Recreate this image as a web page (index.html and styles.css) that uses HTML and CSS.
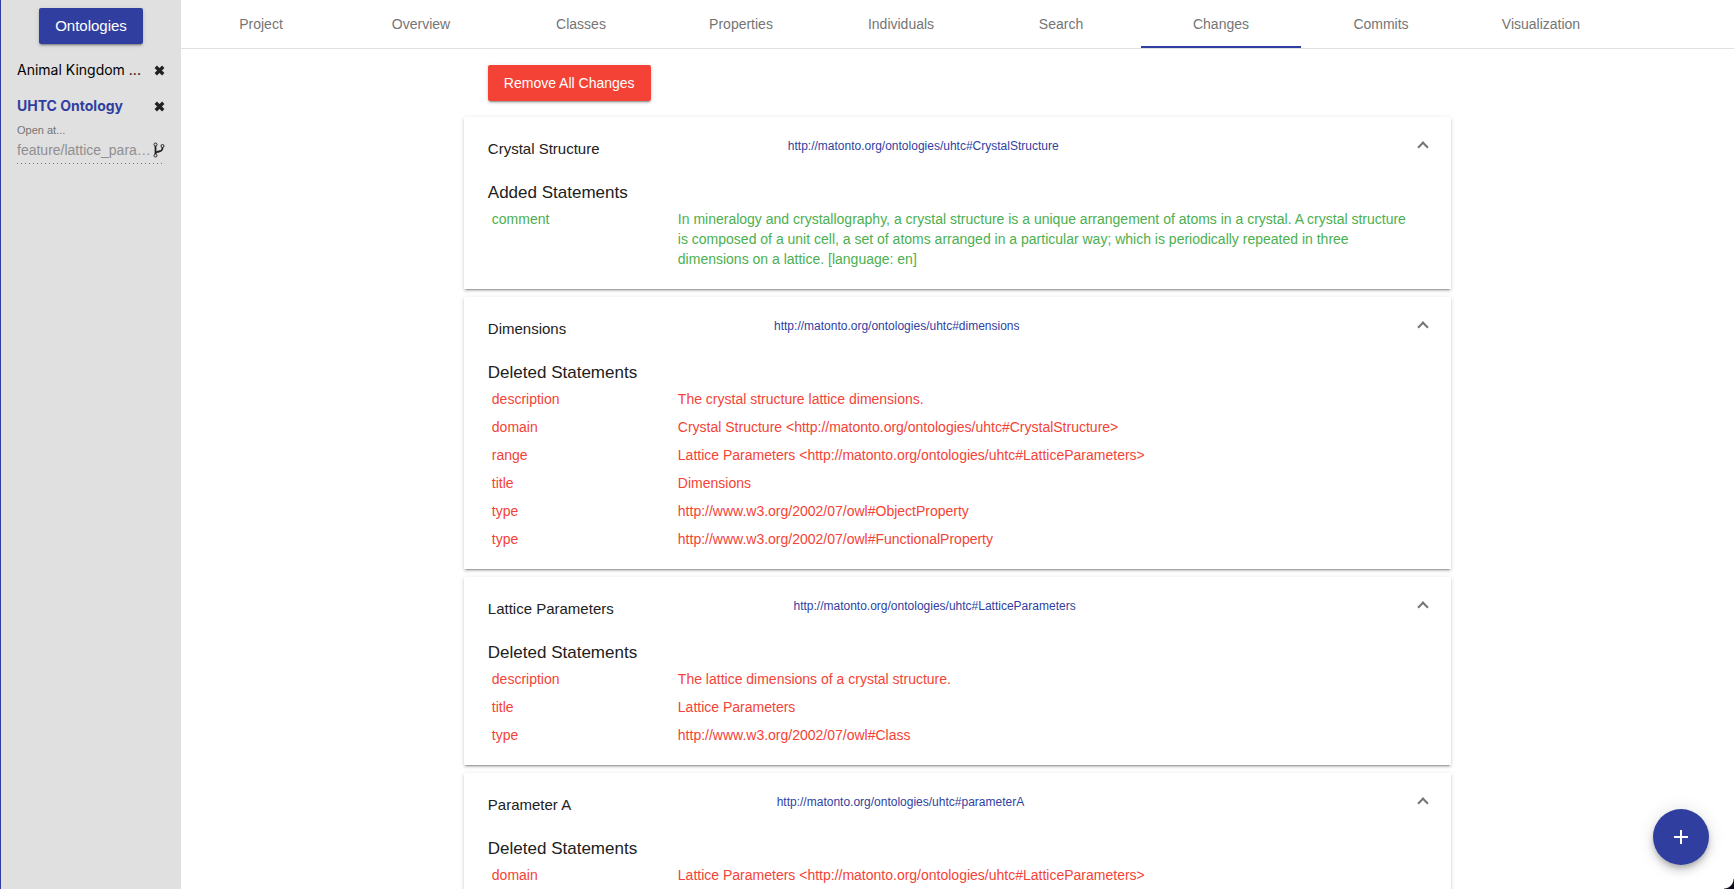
FILE: index.html
```html
<!DOCTYPE html>
<html lang="en">
<head>
<meta charset="utf-8">
<title>Ontology Editor</title>
<link rel="stylesheet" href="styles.css">
</head>
<body>
<div class="app">
  <aside class="sidebar">
    <button class="btn btn-primary" type="button">Ontologies</button>
    <ul class="open-list">
      <li class="open-item">
        <a class="open-name" href="#">Animal Kingdom ...</a>
        <button class="icon-btn" type="button" aria-label="Close Animal Kingdom"><svg width="11" height="11" viewBox="0 0 10 10"><path d="M1.600 1.600 8.400 8.400M8.400 1.600 1.600 8.400" stroke="currentColor" stroke-width="3" fill="none"/></svg></button>
      </li>
      <li class="open-item active">
        <a class="open-name" href="#">UHTC Ontology</a>
        <button class="icon-btn" type="button" aria-label="Close UHTC Ontology"><svg width="11" height="11" viewBox="0 0 10 10"><path d="M1.600 1.600 8.400 8.400M8.400 1.600 1.600 8.400" stroke="currentColor" stroke-width="3" fill="none"/></svg></button>
      </li>
    </ul>
    <div class="branch">
      <label class="branch-label" for="branch">Open at...</label>
      <div class="branch-field">
        <input id="branch" class="branch-input" type="text" value="feature/lattice_para…" disabled>
        <svg class="branch-icon" width="12" height="16" viewBox="0 0 12 16" fill="none" stroke="#212121"><circle cx="2.500" cy="2.500" r="1.500"/><circle cx="2.500" cy="13.500" r="1.500"/><circle cx="9.500" cy="4" r="1.500"/><path d="M2.500 4v8M9.500 5.500c0 4.500-3 3.500-5.500 4.500-1 .4-1.500 1-1.500 2" stroke-width="1.800"/></svg>
      </div>
    </div>
  </aside>
  <div class="page">
    <nav class="tabs">
      <a class="tab" href="#">Project</a>
      <a class="tab" href="#">Overview</a>
      <a class="tab" href="#">Classes</a>
      <a class="tab" href="#">Properties</a>
      <a class="tab" href="#">Individuals</a>
      <a class="tab" href="#">Search</a>
      <a class="tab selected" href="#">Changes</a>
      <a class="tab" href="#">Commits</a>
      <a class="tab" href="#">Visualization</a>
    </nav>
    <main class="content">
      <div class="toolbar"><button class="btn btn-warn" type="button">Remove All Changes</button></div>

      <section class="card">
        <header class="card-header">
          <h3 class="card-title">Crystal Structure</h3>
          <div class="card-iri"><a href="#">http://matonto.org/ontologies/uhtc#CrystalStructure</a></div>
          <button class="toggle" type="button" aria-label="Collapse Crystal Structure"></button>
        </header>
        <h4 class="statements-title">Added Statements</h4>
        <table class="statements added">
          <tr><th>comment</th><td>In mineralogy and crystallography, a crystal structure is a unique arrangement of atoms in a crystal. A crystal structure is composed of a unit cell, a set of atoms arranged in a particular way; which is periodically repeated in three dimensions on a lattice. [language: en]</td></tr>
        </table>
      </section>

      <section class="card">
        <header class="card-header">
          <h3 class="card-title">Dimensions</h3>
          <div class="card-iri"><a href="#">http://matonto.org/ontologies/uhtc#dimensions</a></div>
          <button class="toggle" type="button" aria-label="Collapse Dimensions"></button>
        </header>
        <h4 class="statements-title">Deleted Statements</h4>
        <table class="statements deleted">
          <tr><th>description</th><td>The crystal structure lattice dimensions.</td></tr>
          <tr><th>domain</th><td>Crystal Structure &lt;http://matonto.org/ontologies/uhtc#CrystalStructure&gt;</td></tr>
          <tr><th>range</th><td>Lattice Parameters &lt;http://matonto.org/ontologies/uhtc#LatticeParameters&gt;</td></tr>
          <tr><th>title</th><td>Dimensions</td></tr>
          <tr><th>type</th><td>http://www.w3.org/2002/07/owl#ObjectProperty</td></tr>
          <tr><th>type</th><td>http://www.w3.org/2002/07/owl#FunctionalProperty</td></tr>
        </table>
      </section>

      <section class="card">
        <header class="card-header">
          <h3 class="card-title">Lattice Parameters</h3>
          <div class="card-iri"><a href="#">http://matonto.org/ontologies/uhtc#LatticeParameters</a></div>
          <button class="toggle" type="button" aria-label="Collapse Lattice Parameters"></button>
        </header>
        <h4 class="statements-title">Deleted Statements</h4>
        <table class="statements deleted">
          <tr><th>description</th><td>The lattice dimensions of a crystal structure.</td></tr>
          <tr><th>title</th><td>Lattice Parameters</td></tr>
          <tr><th>type</th><td>http://www.w3.org/2002/07/owl#Class</td></tr>
        </table>
      </section>

      <section class="card">
        <header class="card-header">
          <h3 class="card-title">Parameter A</h3>
          <div class="card-iri"><a href="#">http://matonto.org/ontologies/uhtc#parameterA</a></div>
          <button class="toggle" type="button" aria-label="Collapse Parameter A"></button>
        </header>
        <h4 class="statements-title">Deleted Statements</h4>
        <table class="statements deleted">
          <tr><th>domain</th><td>Lattice Parameters &lt;http://matonto.org/ontologies/uhtc#LatticeParameters&gt;</td></tr>
        </table>
      </section>
    </main>
  </div>
</div>
<button class="fab" type="button" aria-label="Create"><svg width="24" height="24" viewBox="0 0 24 24"><path d="M19 13h-6v6h-2v-6H5v-2h6V5h2v6h6v2z" fill="#fff"/></svg></button>
</body>
</html>
```

FILE: styles.css
```css
* { box-sizing: border-box; }
body { margin: 0; font: 14px/20px "Liberation Sans", Arial, sans-serif; color: #212121; background: #fff; }
a { color: inherit; text-decoration: none; }
button { font: inherit; border: 0; cursor: pointer; }
h3, h4, ul { margin: 0; padding: 0; font-weight: 400; list-style: none; }

.app { display: flex; height: 100vh; overflow: hidden; }

.sidebar { flex: 0 0 181px; min-width: 0; padding: 8px 16px; border-left: 1px solid #303f9f; background: #e0e0e0; }
.btn { display: block; height: 36px; padding: 0 16px; border-radius: 2px; color: #fff; box-shadow: 0 3px 1px -2px rgba(0,0,0,.2), 0 2px 2px rgba(0,0,0,.14), 0 1px 5px rgba(0,0,0,.12); }
.btn-primary { margin: 0 auto; background: #303f9f; font-size: 15px; }
.btn-warn { background: #f44336; }

.open-list { padding-top: 8px; }
.open-item { display: flex; align-items: center; height: 36px; color: #000; font-family: Inter, "Liberation Sans", sans-serif; }
.open-name { flex: 1; white-space: nowrap; }
.open-item.active .open-name { color: #303f9f; font-weight: 700; }
.icon-btn { display: flex; padding: 0; background: none; color: #212121; }
.branch { padding-bottom: 1px; background: repeating-linear-gradient(90deg, #757575 0 1px, transparent 1px 4px) bottom / 100% 1px no-repeat; }
.branch-label { display: block; font-size: 11px; line-height: 12px; color: #757575; }
.branch-field { display: flex; align-items: center; height: 27px; }
.branch-input { flex: 1; width: 100%; min-width: 0; padding: 0; border: 0; background: none; font: inherit; color: #8f8f8f; }
.branch-icon { flex: none; }

.page { flex: 1; min-width: 0; display: flex; flex-direction: column; }
.tabs { display: flex; flex: none; height: 49px; border-bottom: 1px solid #e0e0e0; }
.tab { flex: 0 0 160px; display: flex; align-items: center; justify-content: center; border-top: 2px solid transparent; border-bottom: 2px solid transparent; color: #757575; }
.tab.selected { border-bottom-color: #303f9f; }

.content { flex: 1; min-height: 0; width: 66.667%; margin: 0 auto; padding: 16px 24px 0; }
.toolbar { padding: 0 24px 16px; }
.card { padding: 0 24px 16px; margin-bottom: 8px; background: #fff; box-shadow: 0 3px 1px -2px rgba(0,0,0,.2), 0 2px 2px rgba(0,0,0,.14), 0 1px 5px rgba(0,0,0,.12); }
.card-header { display: flex; align-items: center; height: 64px; }
.card-title { flex: 1 0 auto; margin-right: 16px; font-size: 15px; }
.card-iri { flex: 2 0 auto; margin-right: 16px; padding-bottom: 6px; font-size: 12px; color: #303f9f; }
.toggle { width: 8px; height: 8px; margin-bottom: 4px; padding: 0; background: none; border: solid #757575; border-width: 2px 0 0 2px; transform: rotate(45deg); }
.statements-title { font-size: 17px; line-height: 24px; }
.statements { width: 100%; border-collapse: collapse; table-layout: fixed; }
.statements th, .statements td { padding: 4px; text-align: left; vertical-align: top; font-weight: 400; }
.statements th { width: 186px; }
.statements td { padding-right: 12px; }
.added { color: #4caf50; }
.deleted { color: #f44336; }

.fab { position: fixed; right: 25px; bottom: 24px; display: flex; align-items: center; justify-content: center; width: 56px; height: 56px; padding: 0; border-radius: 50%; background: #303f9f; box-shadow: 0 3px 5px -1px rgba(0,0,0,.2), 0 6px 10px rgba(0,0,0,.14), 0 1px 18px rgba(0,0,0,.12); }

/* rounded window corner */
body::after { content: ""; position: fixed; right: 0; bottom: 0; width: 10px; height: 10px; background: radial-gradient(circle at 0 0, transparent 9px, #0a0820 10px); }
```
